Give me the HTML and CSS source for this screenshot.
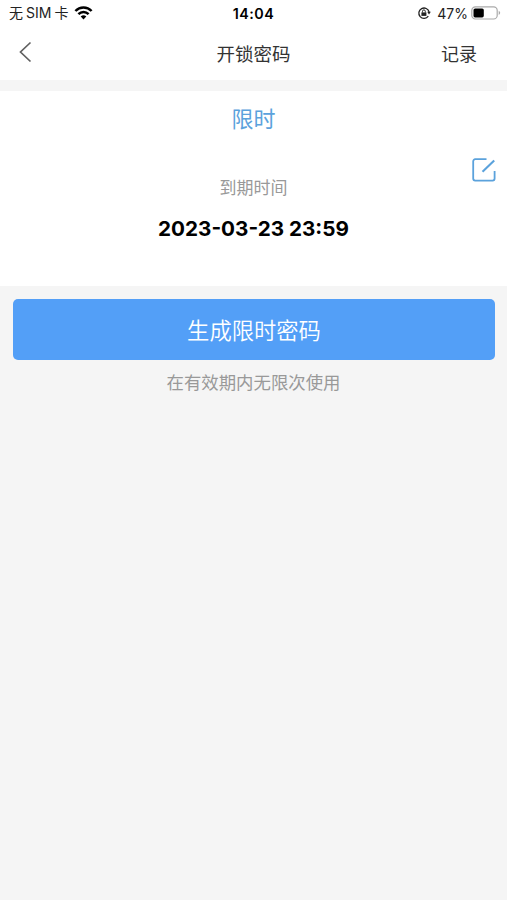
FILE: index.html
```html
<!DOCTYPE html>
<html lang="zh-CN">
<head>
<meta charset="utf-8">
<meta name="viewport" content="width=device-width, initial-scale=1">
<title>开锁密码</title>
<link rel="stylesheet" href="styles.css">
</head>
<body>
<header class="top">
  <div class="status">
    <div class="status-left">
      <span class="carrier"><span>无</span><span class="sim">SIM</span><span>卡</span></span>
      <svg class="wifi" width="19" height="14" viewBox="0 0 18 14" fill="none" stroke="#000" stroke-width="2.5"><path d="M.9 5C5.4.4 12.6.4 17.1 5M3.9 8.1c2.9-2.9 7.3-2.9 10.2 0"/><path d="M6.2 10.5Q9 8 11.8 10.5L9 13.4Z" fill="#000" stroke="none"/></svg>
    </div>
    <span class="clock">14:04</span>
    <div class="status-right">
      <svg class="lock" width="14" height="14" viewBox="0 0 14 14" fill="none" stroke="#222" stroke-width="1.3"><path d="M11.3 10.2A5.2 5.2 0 1 1 12.1 6"/><path d="M10.2 5.8h3.6L12 8.4Z" fill="#222" stroke="none"/><path d="M4.4 6.4h5v3.5h-5z" fill="#222" stroke="none"/><path d="M5.5 6.5V5.3a1.4 1.4 0 0 1 2.8 0v1.2" stroke-width="1"/></svg>
      <span class="percent">47%</span>
      <svg class="battery" width="30" height="14" viewBox="0 0 30 14"><rect x=".8" y=".8" width="25.4" height="12.2" rx="3.6" fill="#fff" stroke="#aaa" stroke-width="1.2"/><rect x="2.5" y="2.4" width="10.3" height="9" rx="1.6"/><path d="M27.7 4.8c2 .8 2 3.4 0 4.2z" fill="#aaa"/></svg>
    </div>
  </div>
  <nav class="nav">
    <svg class="back" width="14" height="22" viewBox="0 0 14 22" fill="none" stroke="#606060" stroke-width="1.7"><path d="M12.5 1.5 2.5 11l10 9.5"/></svg>
    <h1 class="title">开锁密码</h1>
    <span class="records">记录</span>
  </nav>
</header>
<main>
  <section class="card">
    <div class="mode">限时</div>
    <svg class="edit" width="26" height="26" viewBox="0 0 26 26" fill="none" stroke="#5ba2dc" stroke-width="1.8"><path d="M15.5 2.2H4.2a2 2 0 0 0-2 2v17.4a2 2 0 0 0 2 2h17.4a2 2 0 0 0 2-2V14"/><path d="M11.5 14.8 23.2 3.5" stroke-width="2.1"/></svg>
    <div class="label">到期时间</div>
    <div class="date">2023-03-23 23:59</div>
  </section>
  <button class="generate">生成限时密码</button>
  <p class="hint">在有效期内无限次使用</p>
</main>
</body>
</html>
```
FILE: styles.css
```css
* { box-sizing: border-box; }
body {
  margin: 0;
  min-height: 900px;
  background: #f5f5f5;
  color: #000;
  font-family: Inter, "Noto Sans CJK SC", sans-serif;
}
svg { display: block; flex: none; }
.top { height: 80px; background: #fff; }
.status, .nav {
  display: grid;
  grid-template-columns: 1fr auto 1fr;
  align-items: center;
}
.status { height: 26px; padding: 0 6px 0 9px; }
.status-left, .status-right, .carrier { display: flex; align-items: center; }
.status-left { gap: 6px; }
.carrier { gap: 3px; font-size: 14px; line-height: 20px; color: #222; }
.status-right { justify-content: flex-end; }
.clock { margin-left: -3px; font-size: 14.3px; font-weight: 600; letter-spacing: .5px; }
.percent { margin: 0 3px 0 6px; font-size: 14px; color: #222; }
.nav { height: 52px; padding: 0 18px; }
.title { margin: 0; padding-top: 1px; font-size: 18.5px; font-weight: 400; color: #333; }
.records { justify-self: end; margin-right: 12px; padding-top: 1px; font-size: 18px; color: #333; }
.card {
  position: relative;
  height: 195px;
  margin-top: 11px;
  padding-top: 12px;
  background: #fff;
  text-align: center;
}
.mode { font-size: 22px; line-height: 32px; color: #5ba2dc; }
.edit { position: absolute; right: 10px; top: 66px; }
.label { margin-top: 41px; font-size: 17px; line-height: 24px; color: #999; }
.date { margin-top: 15px; font-size: 20.7px; font-weight: 700; line-height: 28px; }
.generate {
  display: block;
  width: calc(100% - 25px);
  height: 61px;
  margin: 13px 12px 0 13px;
  padding: 0 0 2px;
  border: 0;
  border-radius: 5px;
  background: #539ff7;
  color: #fff;
  font: 350 22.3px "Noto Sans CJK SC", sans-serif;
}
.hint { margin: 10px 0 0; font-size: 17.4px; line-height: 26px; text-align: center; color: #999; }
```
